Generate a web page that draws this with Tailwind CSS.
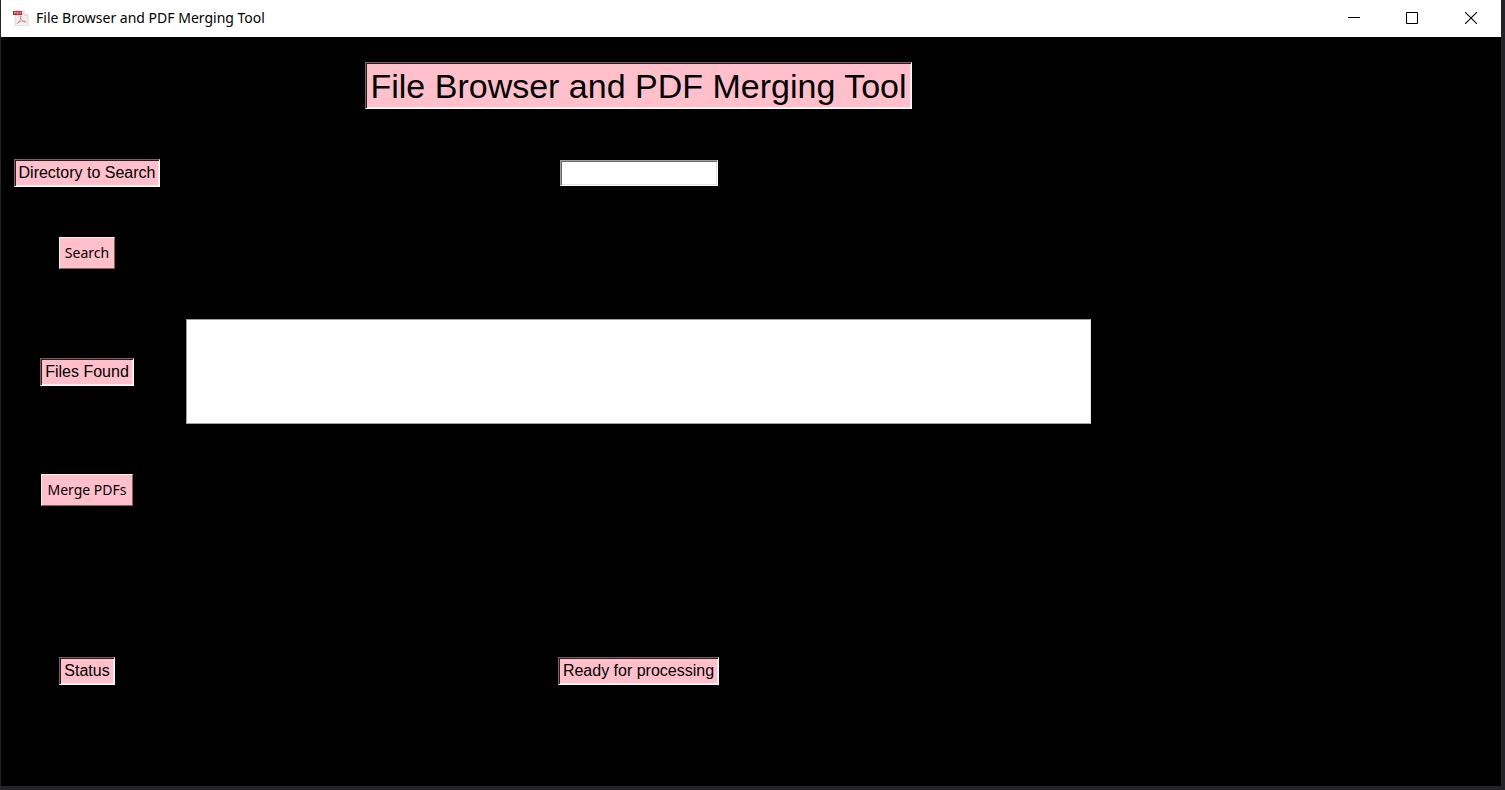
<!DOCTYPE html>
<html lang="en">
<head>
<meta charset="utf-8">
<title>File Browser and PDF Merging Tool</title>
<script src="https://cdn.jsdelivr.net/npm/@tailwindcss/browser@4"></script>
</head>
<body class="flex min-h-screen flex-col bg-[#242328] pr-1 pb-1 pl-px font-['Liberation_Sans',Arial,sans-serif] text-black">
  <header class="flex h-[37px] items-center bg-white pb-px pl-3">
    <svg class="mr-[7px] size-4 shrink-0" viewBox="0 0 16 16" aria-hidden="true">
      <path d="M2 1h9l4 4v11H2z" fill="#f3f0ef" stroke="#d3cecd" stroke-width=".7"/>
      <path d="M11 1v4h4" fill="#fff" stroke="#cbc6c5" stroke-width=".7"/>
      <path d="M0 1h9v4H0z" fill="#c5202c"/>
      <path d="M1.500 4V2h1v1h-1M4 2v2h1V2zM7 4V2h1.200M7 3h1" fill="none" stroke="#f6c9cc" stroke-width=".6"/>
      <path d="M4 13.500c2-1 4.500-5 4-7.500-.8-.6-1 1-.3 2.500s2.600 3.600 4.800 3.600c1.600-.5-.8-1.700-4-.9-2 .4-3.500 1-4.500 2.300z" fill="none" stroke="#d4797c" stroke-width=".8"/>
    </svg>
    <h1 class="font-['Noto_Sans',sans-serif] text-sm">File Browser and PDF Merging Tool</h1>
    <div class="ml-auto flex h-full">
      <button type="button" aria-label="Minimize" class="flex w-[58px] items-center justify-center">
        <svg class="size-3" viewBox="0 0 12 12"><path d="M0 5.500h12" stroke="#000"/></svg>
      </button>
      <button type="button" aria-label="Maximize" class="flex w-[58px] items-center justify-center">
        <svg class="size-3" viewBox="0 0 12 12"><path d="M.5.5h11v11H.5z" fill="none" stroke="#000"/></svg>
      </button>
      <button type="button" aria-label="Close" class="flex w-[60px] items-center justify-center">
        <svg class="size-3" viewBox="0 0 12 12"><path d="M0 0l12 12M12 0L0 12" stroke="#000" stroke-width="1.100"/></svg>
      </button>
    </div>
  </header>
  <main class="grid grow grid-cols-[148px_minmax(0,905px)] content-start items-center justify-items-center gap-x-[25px] gap-y-[50px] bg-black pt-[25px] pl-3">
    <h2 class="col-start-2 border border-t-[#7d6064] border-r-[#fff] border-b-[#fff] border-l-[#7d6064] bg-[#ffc0cb] px-1 pt-1 pb-[3px] text-[34px] leading-[38px] whitespace-nowrap shadow-[inset_1px_1px_#33191e,inset_-1px_-1px_#ffe4e8]">File Browser and PDF Merging Tool</h2>

    <label for="directory" class="col-start-1 border border-t-[#7d6064] border-r-[#fff] border-b-[#fff] border-l-[#7d6064] bg-[#ffc0cb] px-1 py-[3px] text-base leading-5 whitespace-nowrap shadow-[inset_1px_1px_#33191e,inset_-1px_-1px_#ffe4e8]">Directory to Search</label>
    <input id="directory" type="text" class="h-[26px] w-[158px] border border-t-[#a0a0a0] border-r-[#fff] border-b-[#fff] border-l-[#a0a0a0] bg-white px-1 text-base shadow-[inset_1px_1px_#696969,inset_-1px_-1px_#e3e3e3]">

    <button type="button" class="col-start-1 border border-t-[#ffe9ec] border-r-[#7d6064] border-b-[#7d6064] border-l-[#ffe9ec] bg-[#ffc0cb] px-[5px] py-1 font-['Noto_Sans',sans-serif] text-sm leading-[22px] whitespace-nowrap">Search</button>

    <label for="files" class="col-start-1 border border-t-[#7d6064] border-r-[#fff] border-b-[#fff] border-l-[#7d6064] bg-[#ffc0cb] px-1 py-[3px] text-base leading-5 whitespace-nowrap shadow-[inset_1px_1px_#33191e,inset_-1px_-1px_#ffe4e8]">Files Found</label>
    <textarea id="files" readonly class="block h-[105px] w-full resize-none border border-t-[#a0a0a0] border-r-[#e3e3e3] border-b-[#a0a0a0] border-l-[#a0a0a0] bg-white p-1"></textarea>

    <button type="button" class="col-start-1 border border-t-[#ffe9ec] border-r-[#7d6064] border-b-[#7d6064] border-l-[#ffe9ec] bg-[#ffc0cb] px-[5px] py-1 font-['Noto_Sans',sans-serif] text-sm leading-[22px] whitespace-nowrap">Merge PDFs</button>

    <span class="col-start-1 mt-[101px] border border-t-[#7d6064] border-r-[#fff] border-b-[#fff] border-l-[#7d6064] bg-[#ffc0cb] px-1 py-[3px] text-base leading-5 whitespace-nowrap shadow-[inset_1px_1px_#33191e,inset_-1px_-1px_#ffe4e8]">Status</span>
    <output class="mt-[101px] border border-t-[#7d6064] border-r-[#fff] border-b-[#fff] border-l-[#7d6064] bg-[#ffc0cb] px-1 py-[3px] text-base leading-5 whitespace-nowrap shadow-[inset_1px_1px_#33191e,inset_-1px_-1px_#ffe4e8]">Ready for processing</output>
  </main>
</body>
</html>
